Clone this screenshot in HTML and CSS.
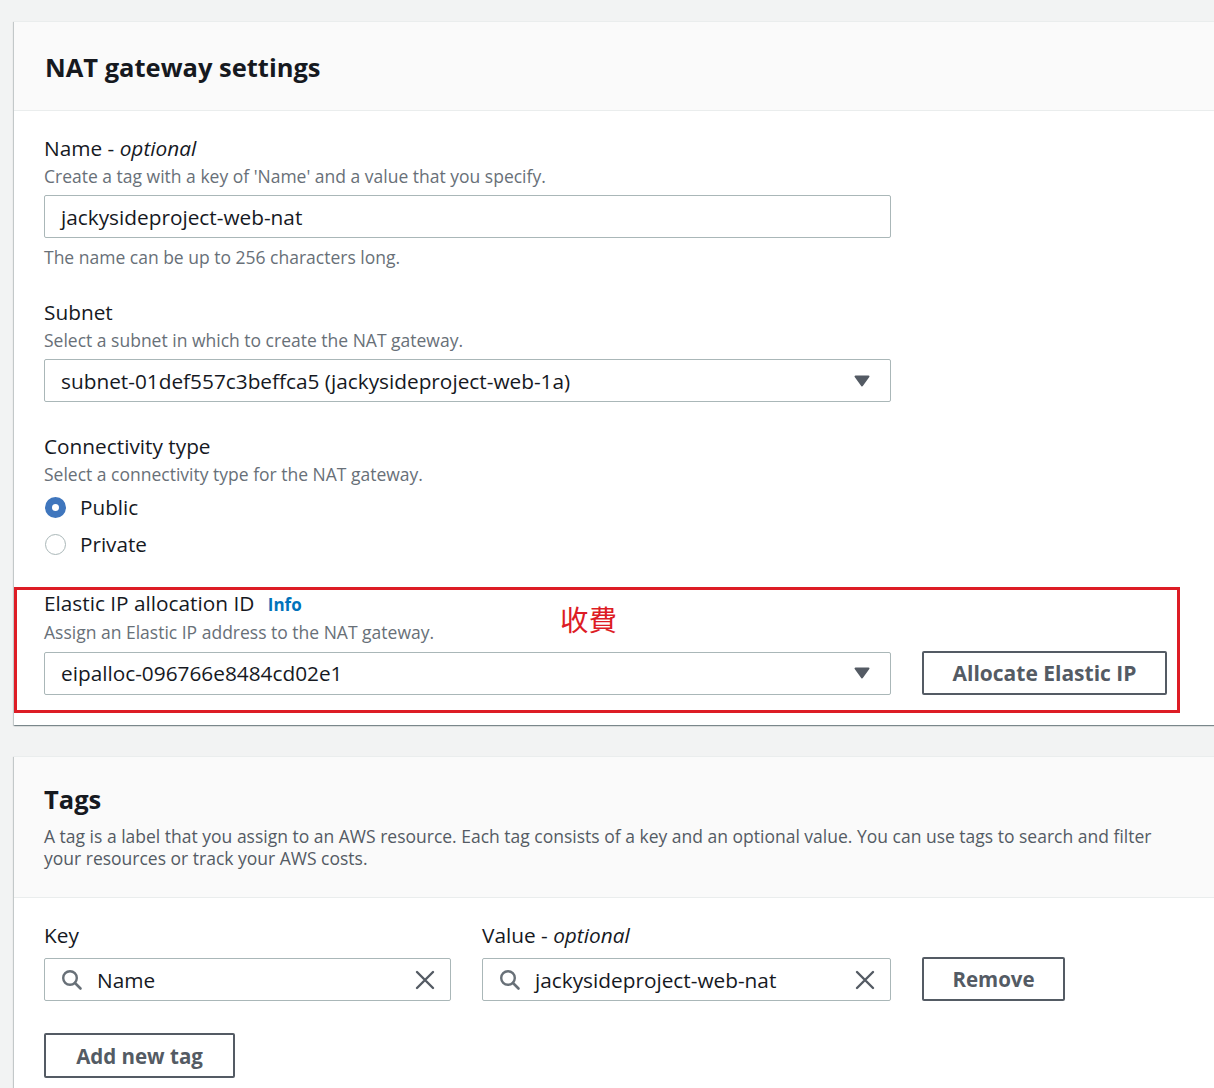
FILE: index.html
```html
<!DOCTYPE html>
<html lang="en">
<head>
<meta charset="utf-8">
<title>NAT gateway settings</title>
<link rel="stylesheet" href="styles.css">
</head>
<body>
<div class="page">
  <section class="card">
    <header class="card-header">
      <h2 class="card-title">NAT gateway settings</h2>
    </header>
    <div class="card-body card-body-settings">
      <div class="field">
        <div class="label">Name - <em>optional</em></div>
        <div class="desc">Create a tag with a key of 'Name' and a value that you specify.</div>
        <div class="input input-wide"><span class="input-text">jackysideproject-web-nat</span></div>
        <div class="hint">The name can be up to 256 characters long.</div>
      </div>

      <div class="field">
        <div class="label">Subnet</div>
        <div class="desc">Select a subnet in which to create the NAT gateway.</div>
        <div class="input input-wide select">
          <span class="input-text">subnet-01def557c3beffca5 (jackysideproject-web-1a)</span>
          <svg class="caret" width="16" height="12" viewBox="0 0 16 12"><path d="M1.5 1.5 H14.5 L8 10.5 Z" fill="#545b64" stroke="#545b64" stroke-width="2" stroke-linejoin="round"/></svg>
        </div>
      </div>

      <div class="field">
        <div class="label">Connectivity type</div>
        <div class="desc">Select a connectivity type for the NAT gateway.</div>
        <div class="radios">
          <div class="radio-row"><span class="radio radio-checked"></span><span class="radio-label">Public</span></div>
          <div class="radio-row"><span class="radio"></span><span class="radio-label">Private</span></div>
        </div>
      </div>

      <div class="field field-marked">
        <div class="label">Elastic IP allocation ID <a class="info">Info</a></div>
        <div class="desc">Assign an Elastic IP address to the NAT gateway.</div>
        <div class="row">
          <div class="input input-wide select">
            <span class="input-text">eipalloc-096766e8484cd02e1</span>
            <svg class="caret" width="16" height="12" viewBox="0 0 16 12"><path d="M1.5 1.5 H14.5 L8 10.5 Z" fill="#545b64" stroke="#545b64" stroke-width="2" stroke-linejoin="round"/></svg>
          </div>
          <button class="btn btn-allocate">Allocate Elastic IP</button>
        </div>
        <span class="note">收費</span>
      </div>
    </div>
  </section>

  <section class="card card-tags">
    <header class="card-header">
      <h2 class="card-title">Tags</h2>
      <p class="card-desc">A tag is a label that you assign to an AWS resource. Each tag consists of a key and an optional value. You can use tags to search and filter your resources or track your AWS costs.</p>
    </header>
    <div class="card-body card-body-tags">
      <div class="tag-row">
        <div class="tag-col tag-key">
          <div class="label">Key</div>
          <div class="input search">
            <svg class="search-icon" width="22" height="22" viewBox="0 0 22 22"><circle cx="9" cy="9" r="6.8" fill="none" stroke="#687078" stroke-width="2.4"/><path d="M14 14 L19.5 19.5" stroke="#687078" stroke-width="2.6" stroke-linecap="round"/></svg>
            <span class="input-text">Name</span>
            <svg class="clear-icon" width="22" height="22" viewBox="0 0 22 22"><path d="M3 3 L19 19 M19 3 L3 19" stroke="#545b64" stroke-width="2.4" stroke-linecap="round"/></svg>
          </div>
        </div>
        <div class="tag-col tag-value">
          <div class="label">Value - <em>optional</em></div>
          <div class="input search">
            <svg class="search-icon" width="22" height="22" viewBox="0 0 22 22"><circle cx="9" cy="9" r="6.8" fill="none" stroke="#687078" stroke-width="2.4"/><path d="M14 14 L19.5 19.5" stroke="#687078" stroke-width="2.6" stroke-linecap="round"/></svg>
            <span class="input-text">jackysideproject-web-nat</span>
            <svg class="clear-icon" width="22" height="22" viewBox="0 0 22 22"><path d="M3 3 L19 19 M19 3 L3 19" stroke="#545b64" stroke-width="2.4" stroke-linecap="round"/></svg>
          </div>
        </div>
        <button class="btn btn-remove">Remove</button>
      </div>
      <button class="btn btn-add">Add new tag</button>
    </div>
  </section>
</div>
</body>
</html>
```

FILE: styles.css
```css
html, body {
  margin: 0;
  padding: 0;
}
body {
  background: #f2f3f3;
  font-family: "Open Sans", "Liberation Sans", Arial, sans-serif;
  color: #16191f;
  overflow: hidden;
  height: 1088px;
}
.page {
  padding: 21px 0 0 14px;
}
.card {
  width: 1220px;
  background: #fff;
  box-shadow: 0 1px 1px 0 rgba(0, 28, 36, 0.3), 1px 1px 1px 0 rgba(0, 28, 36, 0.15), -1px 1px 1px 0 rgba(0, 28, 36, 0.15);
  border-top: 1px solid #eaeded;
}
.card-tags {
  margin-top: 31px;
}
.card-header {
  background: #fafafa;
  border-bottom: 1px solid #eaeded;
  padding: 29px 30px 27px 31px;
}
.card-tags .card-header {
  padding-top: 26px;
  padding-bottom: 28px;
}
.card-title {
  margin: 0;
  font-size: 25.5px;
  line-height: 32px;
  font-weight: 700;
  color: #16191f;
}
.card-tags .card-title {
  margin-left: -1px;
}
.card-desc {
  margin: 10px 0 0 -1px;
  width: 1140px;
  font-size: 17.5px;
  line-height: 22px;
  color: #545b64;
}
.card-body {
  padding: 25px 30px 12px 30px;
}
.card-body-tags {
  padding-top: 25px;
  padding-bottom: 40px;
}
.field + .field {
  margin-top: 32px;
}
.label {
  font-size: 20.8px;
  line-height: 24px;
  color: #16191f;
  white-space: nowrap;
}
.label em {
  font-style: italic;
}
.info {
  color: #0073bb;
  font-weight: 700;
  font-size: 17px;
  margin-left: 8px;
}
.desc, .hint {
  font-size: 17.5px;
  line-height: 22px;
  color: #687078;
}
.desc {
  margin-top: 5px;
}
.hint {
  margin-top: 8px;
}
.input {
  box-sizing: border-box;
  height: 43px;
  border: 1px solid #aab7b8;
  border-radius: 2px;
  background: #fff;
  display: flex;
  align-items: center;
  padding: 0 16px;
  margin-top: 8px;
}
.input-wide {
  width: 847px;
}
.input-text {
  font-size: 20.8px;
  color: #16191f;
  flex: 1;
  white-space: nowrap;
}
.select .caret {
  flex: none;
  margin-right: 4px;
}
.radios {
  margin-top: 10px;
  display: flex;
  flex-direction: column;
  gap: 13px;
}
.radio-row {
  display: flex;
  align-items: center;
  height: 24px;
}
.radio {
  box-sizing: border-box;
  width: 21px;
  height: 21px;
  border-radius: 50%;
  border: 1.5px solid #aab7b8;
  margin-left: 1px;
  margin-right: 14px;
  background: #fff;
}
.radio-checked {
  border: 7px solid #3f76bd;
}
.radio-label {
  font-size: 20.7px;
}
.field.field-marked {
  position: relative;
  margin-top: 31px;
  margin-left: -30px;
  width: 1166px;
  box-sizing: border-box;
  border: 3px solid #dd1c25;
  padding: 1px 0 15px 27px;
}
.field-marked .desc {
  margin-top: 4px;
}
.row {
  display: flex;
  align-items: center;
  gap: 31px;
  margin-top: 8px;
}
.row .input {
  margin-top: 0;
}
.note {
  position: absolute;
  left: 543px;
  top: 11px;
  font-family: "Noto Sans CJK TC", "Noto Sans CJK SC", sans-serif;
  font-size: 28.5px;
  line-height: 36px;
  font-weight: 400;
  color: #dd1c25;
}
.btn {
  box-sizing: border-box;
  height: 44px;
  border: 2px solid #545b64;
  border-radius: 2px;
  background: #fff;
  color: #545b64;
  font-family: "Open Sans", "Liberation Sans", Arial, sans-serif;
  font-weight: 700;
  font-size: 20.5px;
  padding: 0;
  flex: none;
}
.btn-allocate {
  width: 245px;
  font-size: 21px;
}
.tag-row {
  display: flex;
  align-items: flex-end;
  gap: 31px;
}
.tag-key .input {
  width: 407px;
  margin-top: 11px;
}
.tag-value .input {
  width: 409px;
  margin-top: 11px;
}
.search {
  padding: 0 14px 0 16px;
}
.search-icon {
  flex: none;
  margin-right: 14px;
}
.clear-icon {
  flex: none;
}
.btn-remove {
  width: 143px;
}
.btn-add {
  width: 191px;
  height: 45px;
  margin-top: 32px;
}
```
